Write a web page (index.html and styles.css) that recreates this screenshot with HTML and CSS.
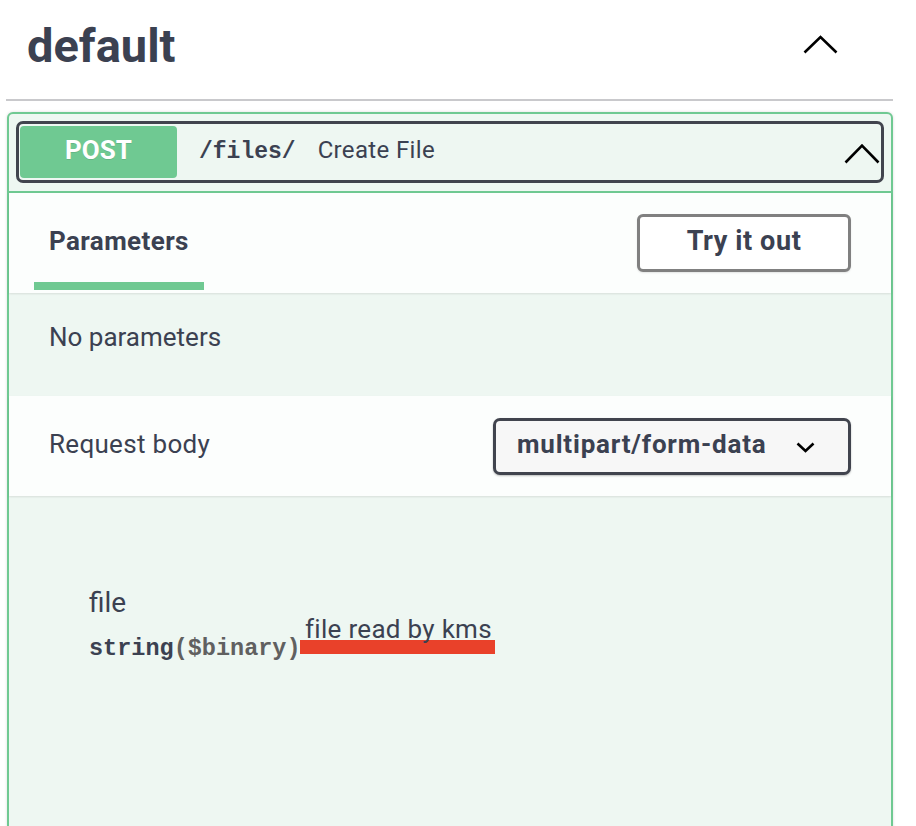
FILE: index.html
```html
<!DOCTYPE html>
<html lang="en">
<head>
<meta charset="utf-8">
<title>default</title>
<link rel="stylesheet" href="styles.css">
</head>
<body>
<div class="page">
  <div class="tag">
    <h3 class="tag-title">default</h3>
    <svg class="tag-chevron" width="35" height="19" viewBox="0 0 35 19"><polyline points="1.5,17.5 17.5,2 33.5,17.5" fill="none" stroke="#000" stroke-width="2.6"/></svg>
  </div>
  <div class="opblock">
    <div class="summary-wrap">
      <div class="summary">
        <span class="method">POST</span>
        <span class="path">/files/</span>
        <span class="summary-desc">Create File</span>
        <svg class="summary-chevron" width="36" height="21" viewBox="0 0 36 21"><polyline points="1.5,19.5 18,2.5 34.5,19.5" fill="none" stroke="#000" stroke-width="2.6"/></svg>
      </div>
    </div>
    <div class="section-header">
      <div class="tab"><h4 class="tab-title">Parameters</h4></div>
      <button class="try-out">Try it out</button>
    </div>
    <div class="no-params">No parameters</div>
    <div class="section-header body-header">
      <h4 class="rb-title">Request body</h4>
      <div class="select">
        <span class="select-text">multipart/form-data</span>
        <svg class="select-chevron" width="19" height="11" viewBox="0 0 19 11"><polyline points="1.5,1.5 9.5,9 17.5,1.5" fill="none" stroke="#000" stroke-width="2.6"/></svg>
      </div>
    </div>
    <div class="body-content">
      <div class="param-row">
        <div class="param-name">
          <div class="name">file</div>
          <div class="type">string<span class="format">($binary)</span></div>
        </div>
        <div class="param-desc">
          <span class="desc-text">file read by kms</span>
          <div class="mark"></div>
        </div>
      </div>
    </div>
  </div>
</div>
</body>
</html>
```
FILE: styles.css
```css
html, body {
  margin: 0;
  padding: 0;
  background: #fff;
}
body {
  font-family: Roboto, "Liberation Sans", sans-serif;
  color: #3b4151;
  overflow: hidden;
}
.page {
  padding: 0 23px 0 6px;
}
.tag {
  display: flex;
  align-items: center;
  justify-content: space-between;
  height: 89px;
  padding: 0 55px 10px 21px;
  border-bottom: 2px solid #c9c9cc;
}
.tag-title {
  margin: 2px 0 0 0;
  font-size: 47px;
  line-height: 1;
  font-weight: 700;
  color: #3b4151;
}
.tag-chevron {
  display: block;
}
.opblock {
  margin: 11px 0 0 1px;
  border: 2px solid #6fc992;
  border-radius: 6px;
  background: #eef7f2;
  box-shadow: 0 0 3px rgba(0, 0, 0, 0.15);
}
.summary-wrap {
  padding: 7px 7px 8px;
  border-bottom: 2px solid #6fc992;
}
.summary {
  display: flex;
  align-items: center;
  height: 54px;
  border: 3px solid #41444e;
  border-radius: 7px;
  padding: 1px 0 1px 1px;
}
.method {
  box-sizing: border-box;
  display: flex;
  align-items: center;
  justify-content: center;
  width: 157px;
  height: 52px;
  padding-bottom: 4px;
  background: #6fc992;
  border-radius: 4px;
  color: #fff;
  font-weight: 700;
  font-size: 26px;
  text-shadow: 0 1px 0 rgba(0, 0, 0, 0.1);
}
.path {
  margin-left: 22px;
  padding-bottom: 0;
  font-family: "Liberation Mono", monospace;
  font-weight: 700;
  font-size: 23px;
  color: #3b4151;
}
.summary-desc {
  margin-left: 22px;
  padding-bottom: 4px;
  font-size: 24px;
  letter-spacing: 0.35px;
  color: #3b4151;
}
.summary-chevron {
  display: block;
  margin-left: auto;
  margin-right: 1px;
  margin-top: 2px;
}
.section-header {
  display: flex;
  align-items: center;
  justify-content: space-between;
  height: 100px;
  padding: 0 40px 0 25px;
  background: rgba(255, 255, 255, 0.8);
  box-shadow: 0 1px 2px rgba(0, 0, 0, 0.1);
  position: relative;
}
.tab {
  align-self: stretch;
  display: flex;
  flex-direction: column;
  justify-content: flex-end;
  padding-bottom: 3px;
}
.tab-title {
  margin: 0;
  width: 155px;
  padding: 0 0 25px 15px;
  font-size: 26px;
  line-height: 32px;
  font-weight: 700;
  letter-spacing: 0.4px;
  border-bottom: 8px solid #6fc992;
}
.try-out {
  box-sizing: border-box;
  width: 214px;
  height: 58px;
  border: 3px solid #808080;
  border-radius: 6px;
  background: #fff;
  box-shadow: 0 1px 2px rgba(0, 0, 0, 0.1);
  font-family: Roboto, "Liberation Sans", sans-serif;
  font-weight: 700;
  font-size: 27px;
  letter-spacing: 0.6px;
  color: #3b4151;
  padding: 0 0 5px;
}
.no-params {
  height: 75px;
  padding: 28px 40px 0;
  font-size: 26px;
  line-height: 32px;
}
.body-header {
  padding-left: 40px;
}
.rb-title {
  margin: 0;
  padding-bottom: 5px;
  font-size: 26px;
  line-height: 32px;
  font-weight: 400;
  letter-spacing: 0.3px;
}
.select {
  box-sizing: border-box;
  display: flex;
  align-items: center;
  justify-content: space-between;
  width: 358px;
  height: 57px;
  padding: 0 33px 0 21px;
  border: 3px solid #41444e;
  border-radius: 7px;
  background: #f7f7f7;
  box-shadow: 0 1px 2px rgba(0, 0, 0, 0.25);
  font-weight: 700;
  font-size: 26px;
}
.select-text {
  padding-bottom: 5px;
  letter-spacing: 0.8px;
}
.select-chevron {
  display: block;
  margin-top: 2px;
}
.body-content {
  min-height: 420px;
  padding: 90px 40px 0 80px;
}
.param-row {
  display: flex;
  align-items: flex-start;
}
.param-name {
  width: 211px;
}
.name {
  font-size: 28px;
  line-height: 34px;
}
.type {
  margin-top: 15px;
  font-family: "Liberation Mono", monospace;
  font-weight: 700;
  font-size: 23.5px;
  line-height: 28px;
  color: #3b4151;
  white-space: nowrap;
}
.format {
  color: #606060;
}
.param-desc {
  display: flex;
  flex-direction: column;
  align-items: flex-start;
  padding-top: 27px;
}
.desc-text {
  padding: 0 5px;
  font-size: 26px;
  line-height: 32px;
  letter-spacing: 0.3px;
  position: relative;
  z-index: 1;
}
.mark {
  width: 195px;
  height: 14px;
  margin-top: -5px;
  background: #e9412a;
}
```
